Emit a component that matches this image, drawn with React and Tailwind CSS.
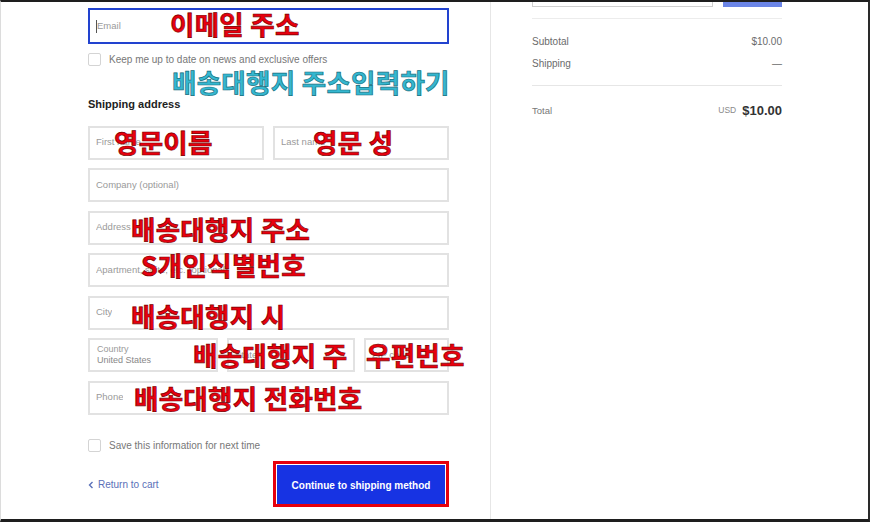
import React from "react";

const note = "absolute whitespace-nowrap font-bold leading-none text-[26.5px] tracking-[0.3px] [font-family:'Noto_Sans_CJK_KR','Noto_Sans',sans-serif]";
const red = `${note} text-[#e8000e] [-webkit-text-stroke:0.7px_#7a0000]`;
const teal = `${note} text-[#35b7d0] [-webkit-text-stroke:0.7px_#16707f]`;

// Text field with an optional annotation over it
const Field = ({ label, className = "", children }) => (
  <div className={`relative h-[34px] border-2 border-[#e2e2e2] bg-white flex items-center px-[6px] ${className}`}>
    <span className="text-[9.5px] text-[#9a9a9a] whitespace-nowrap overflow-hidden">{label}</span>
    {children}
  </div>
);

const Check = ({ children }) => (
  <div className="flex items-center gap-[8px]">
    <div className="w-[13px] h-[13px] border border-[#d4d4d4] rounded-[2px] bg-white"></div>
    <span className="text-[10px] text-[#777]">{children}</span>
  </div>
);

export default function App() {
  return (
    <div className="w-[870px] h-[522px] overflow-hidden bg-white flex border-t-2 border-b-[3px] border-r-2 border-l border-t-[#1e1e1e] border-b-[#1e1e1e] border-r-[#2a2a2a] border-l-[#dcdcdc] [font-family:'Liberation_Sans',Arial,sans-serif]">
      {/* Left: form */}
      <div className="relative w-[490px] shrink-0 border-r border-[#e6e6e6] pl-[87px] pr-[41px] pt-[6px]">
        <div className="relative h-[36px] border-2 border-[#2243cf] flex items-center px-[6px]">
          <span className="w-px h-[13px] bg-[#555]"></span>
          <span className="text-[9.5px] text-[#9a9a9a]">Email</span>
          <span className={`${red} left-[80px] top-[1px]`}>이메일 주소</span>
        </div>

        <div className="mt-[8px]">
          <Check>Keep me up to date on news and exclusive offers</Check>
        </div>

        <div className="relative">
          <span className={`${teal} left-[84px] top-[2px]`}>배송대행지 주소입력하기</span>
          <h2 className="pt-[29px] text-[11px] font-bold text-[#222]">Shipping address</h2>
        </div>

        <div className="mt-[13px] flex flex-col gap-[8.5px]">
          <div className="flex gap-[9px]">
            <Field label="First name" className="flex-1">
              <span className={`${red} left-[24px] top-[1px]`}>영문이름</span>
            </Field>
            <Field label="Last name" className="flex-1">
              <span className={`${red} left-[38px] top-[1px]`}>영문 성</span>
            </Field>
          </div>
          <Field label="Company (optional)" />
          <Field label="Address">
            <span className={`${red} left-[41px] top-[3px]`}>배송대행지 주소</span>
          </Field>
          <Field label="Apartment, suite, etc. (optional)">
            <span className={`${red} left-[51px] top-[-3px]`}>S개인식별번호</span>
          </Field>
          <Field label="City">
            <span className={`${red} left-[41px] top-[5px]`}>배송대행지 시</span>
          </Field>
          <div className="flex gap-[9px]">
            <div className="w-[130px] h-[34px] border-2 border-[#e2e2e2] flex flex-col justify-center px-[7px] leading-[11px]">
              <span className="text-[9px] text-[#9a9a9a]">Country</span>
              <span className="text-[9px] text-[#888]">United States</span>
            </div>
            <div className="relative w-[128px] h-[34px] border-2 border-[#e2e2e2] flex items-center px-[6px]">
              <span className="text-[9.5px] text-[#9a9a9a]">State</span>
              <span className={`${red} left-[-36px] top-[2px]`}>배송대행지 주</span>
            </div>
            <div className="relative flex-1 h-[34px] border-2 border-[#e2e2e2] flex items-center px-[6px]">
              <span className="text-[9.5px] text-[#9a9a9a] whitespace-nowrap">ZIP code</span>
              <span className={`${red} left-[0px] top-[2px]`}>우편번호</span>
            </div>
          </div>
          <Field label="Phone">
            <span className={`${red} left-[44px] top-[2px]`}>배송대행지 전화번호</span>
          </Field>
        </div>

        <div className="mt-[23px]">
          <Check>Save this information for next time</Check>
        </div>

        <div className="mt-[8px] flex items-center justify-between">
          <a className="flex items-center gap-[4px] text-[10px] text-[#5b70b8] pt-[2px]">
            <svg width="6" height="8" viewBox="0 0 6 8" fill="none">
              <path d="M4.5 1L1.5 4l3 3" stroke="#5b70b8" strokeWidth="1.4" />
            </svg>
            Return to cart
          </a>
          <div className="w-[176px] h-[46px] border-[3px] border-[#e6000d] bg-white pt-[1px] px-[1px]">
            <button className="w-full h-full bg-[#1733e3] text-white text-[10px] font-bold pt-[3px]">
              Continue to shipping method
            </button>
          </div>
        </div>
      </div>

      {/* Right: order summary */}
      <div className="flex-1 pl-[41px] pr-[86px]">
        <div className="flex gap-[10px] -mt-[31px] h-[36px]">
          <div className="flex-1 border border-[#cfcfcf] bg-white"></div>
          <div className="w-[59px] bg-[#6b85e6]"></div>
        </div>
        <div className="mt-[11px] border-t border-[#ececec]"></div>
        <div className="pt-[18px] pb-[16px] flex flex-col gap-[12px] border-b border-[#e6e6e6]">
          <div className="flex justify-between text-[10px] text-[#6b6b6b] leading-[10px]">
            <span>Subtotal</span>
            <span>$10.00</span>
          </div>
          <div className="flex justify-between text-[10px] text-[#6b6b6b] leading-[10px]">
            <span>Shipping</span>
            <span>—</span>
          </div>
        </div>
        <div className="pt-[15px] flex justify-between items-center">
          <span className="text-[9.5px] text-[#777]">Total</span>
          <span className="flex items-center gap-[6px]">
            <span className="text-[8.5px] text-[#8a8a8a]">USD</span>
            <span className="text-[13px] font-bold text-[#333]">$10.00</span>
          </span>
        </div>
      </div>
    </div>
  );
}
